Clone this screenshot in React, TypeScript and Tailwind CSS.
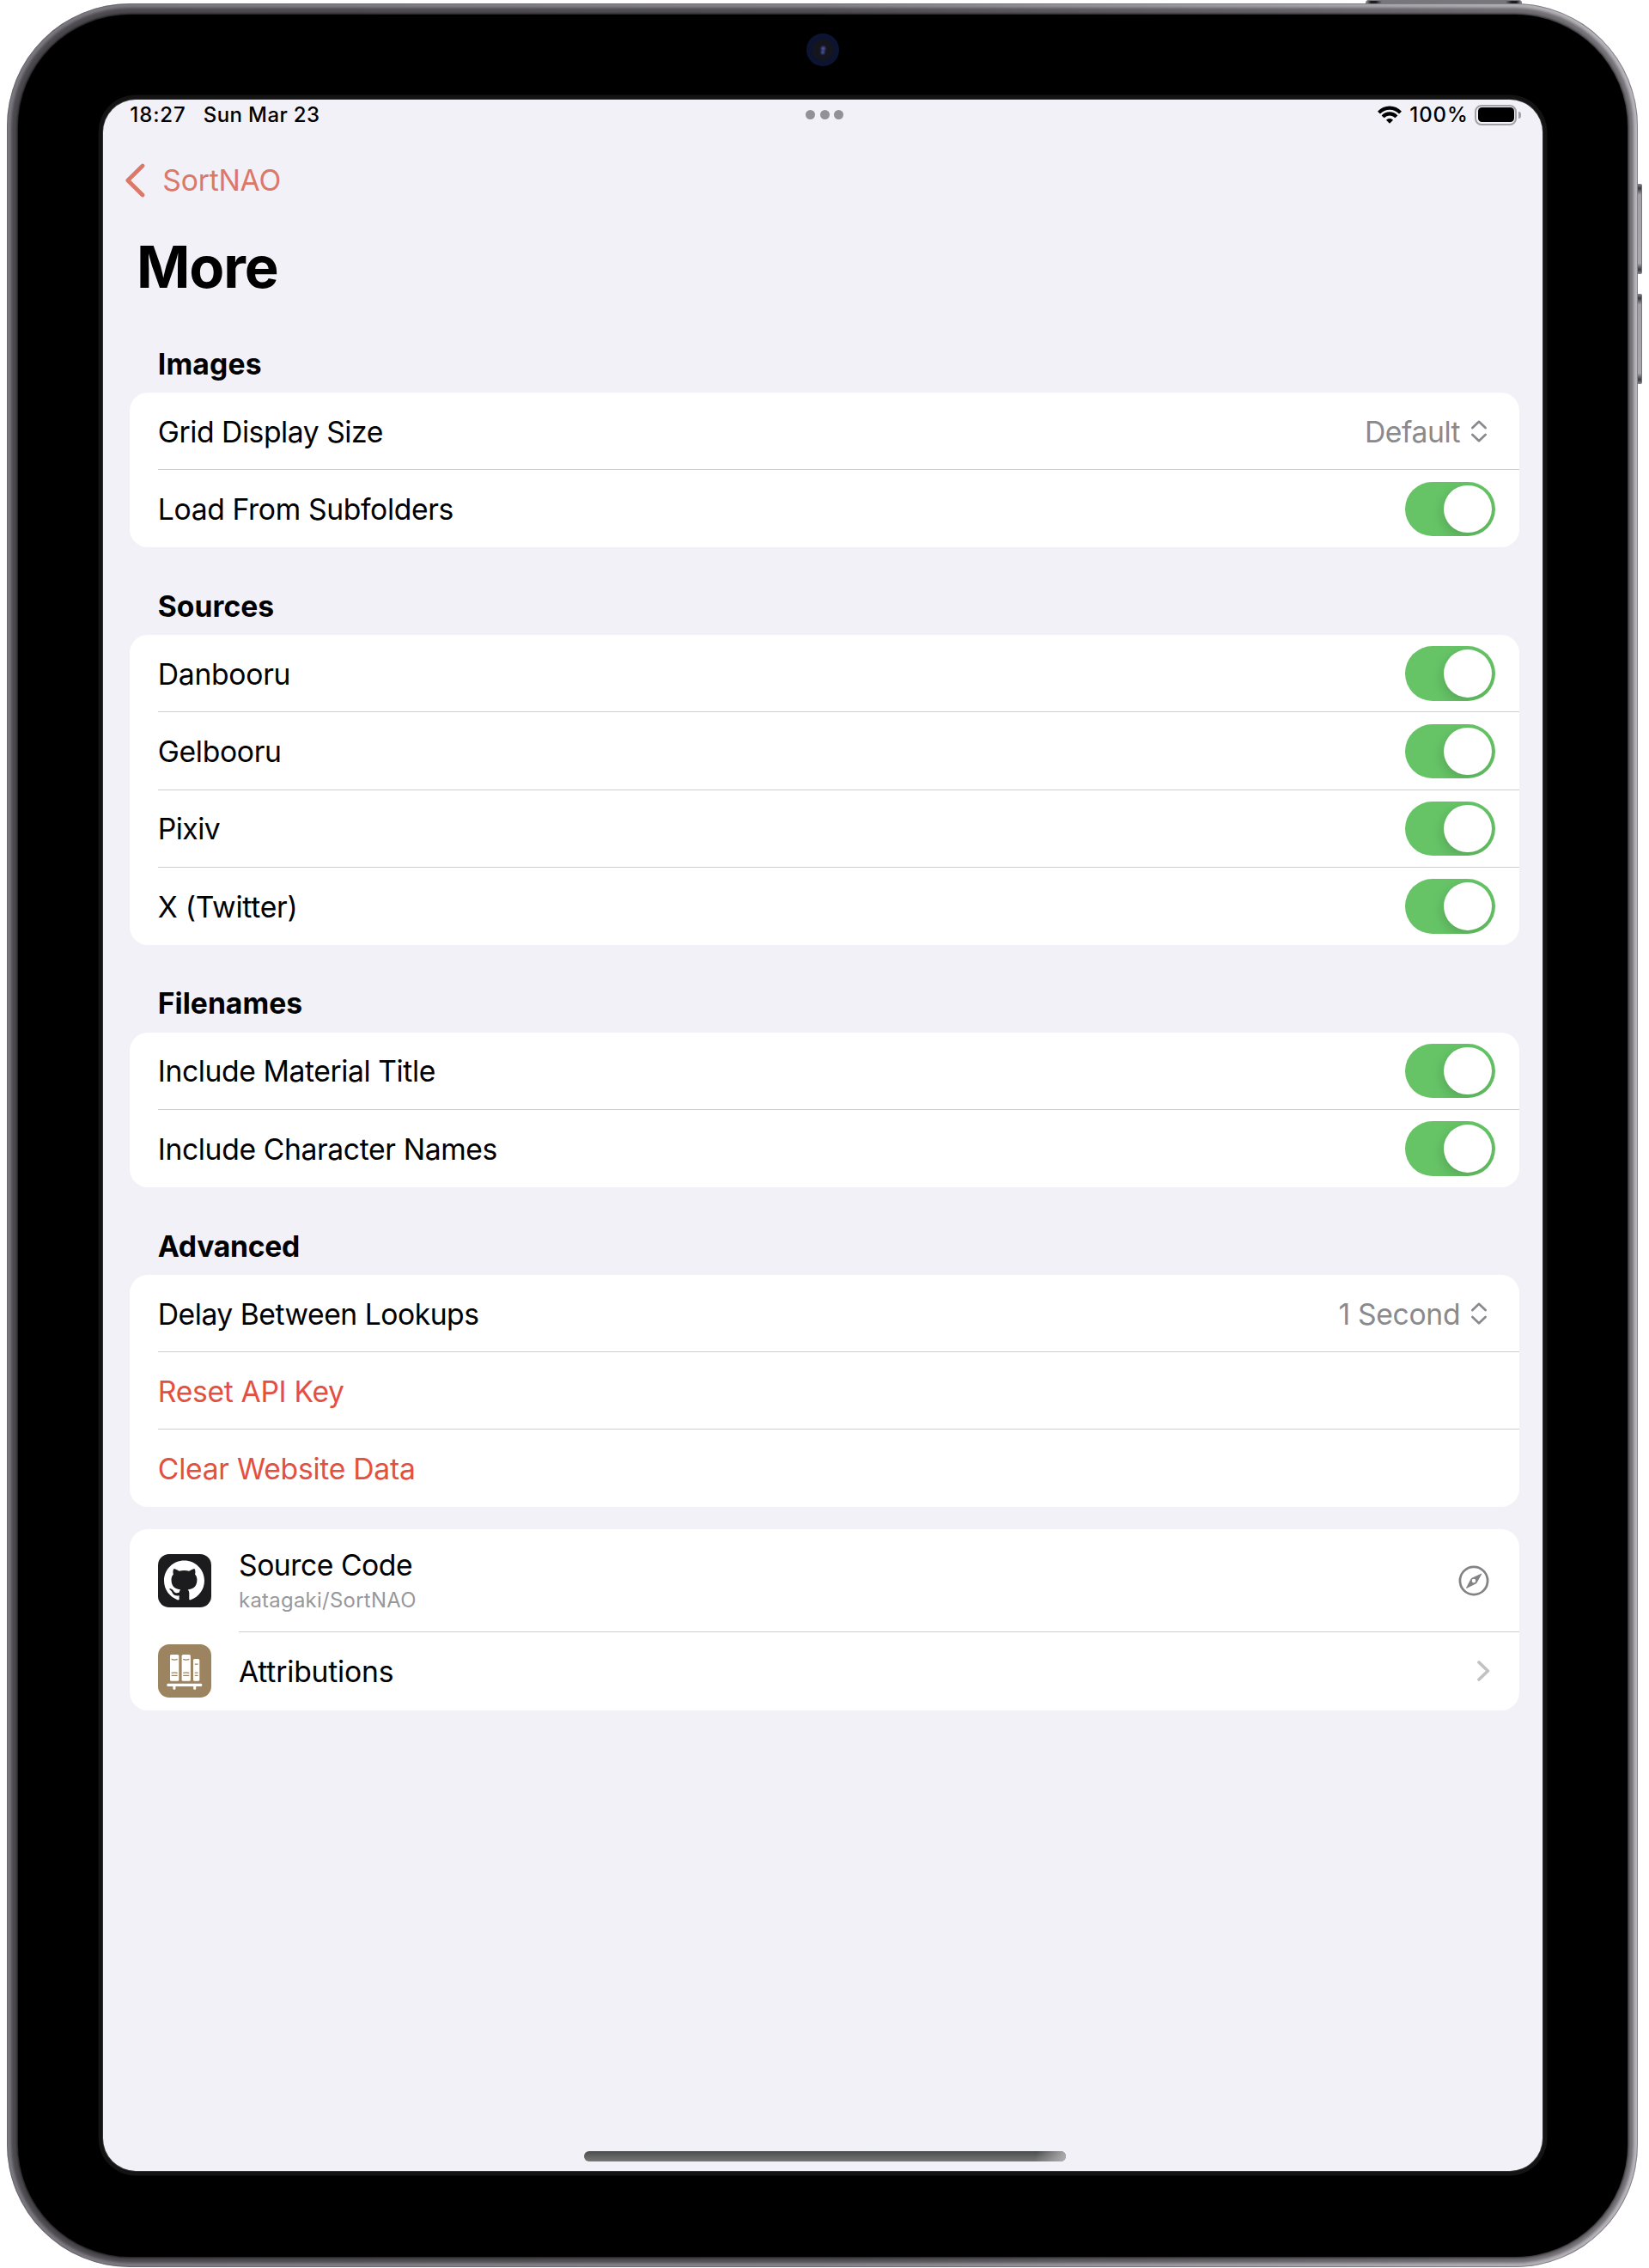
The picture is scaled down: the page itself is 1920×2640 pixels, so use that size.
import type { ReactNode } from "react";
import { SiGithub } from "react-icons/si";

function Toggle() {
  return (
    <div className="flex h-[63.5px] w-[105px] shrink-0 items-center justify-end overflow-hidden rounded-full bg-[#66c466] pr-1">
      <div className="size-[55.5px] rounded-full bg-white shadow-[-2px_5px_14px_rgba(0,0,0,0.14)]" />
    </div>
  );
}

function UpDown() {
  return (
    <svg viewBox="0 0 20 28" className="ml-[12px] mr-[8.5px] h-7 w-5" fill="none" stroke="#8a8a8e" strokeWidth="2.7" strokeLinecap="round" strokeLinejoin="round">
      <path d="M2.4 10 L10 2.8 L17.6 10" />
      <path d="M2.4 18 L10 25.2 L17.6 18" />
    </svg>
  );
}

function Row({ label, tracking, last, red, children }: { label: string; tracking: string; last?: boolean; red?: boolean; children?: ReactNode }) {
  return (
    <div className={`ml-[32.5px] flex h-[90.2px] items-center justify-between pr-[28.3px] ${last ? "" : "shadow-[inset_0_-1px_0_#cfcfd2]"}`}>
      <span className={`whitespace-nowrap pt-[2px] ${tracking} ${red ? "text-[#e4503f]" : "text-black"}`}>{label}</span>
      {children}
    </div>
  );
}

function Picker({ value, tracking }: { value: string; tracking: string }) {
  return (
    <div className="flex items-center text-[#8a8a8e]">
      <span className={`whitespace-nowrap pt-[2px] ${tracking}`}>{value}</span>
      <UpDown />
    </div>
  );
}

function Heading({ children, tracking }: { children: string; tracking: string }) {
  return (
    <h2 className={`h-[101.75px] pl-[32.5px] pt-[48.5px] font-bold leading-[40px] ${tracking}`}>{children}</h2>
  );
}

function Card({ children }: { children: ReactNode }) {
  return <div className="overflow-hidden rounded-[21px] bg-white">{children}</div>;
}

function StatusBar() {
  return (
    <div className="relative flex h-[35px] items-center pl-[31.3px] pr-[24.5px] text-[24px] font-medium leading-none">
      <span className="w-[85.5px] tracking-[0.9px]">18:27</span>
      <span className="tracking-[0.38px]">Sun Mar 23</span>
      <div className="absolute left-[818px] top-[12px] flex gap-[5.5px]">
        <i className="size-[11px] rounded-full bg-[#929197]" />
        <i className="size-[11px] rounded-full bg-[#929197]" />
        <i className="size-[11px] rounded-full bg-[#929197]" />
      </div>
      <svg viewBox="0 0 28 21" className="ml-auto mr-[9.3px] h-[21px] w-[28px]" fill="none" stroke="#000" strokeWidth="4.2">
        <path d="M1.5 8.1 C8.5 0.9 19.5 0.9 26.5 8.1" />
        <path d="M6.1 12.9 C10.6 8.3 17.4 8.3 21.9 12.9" />
        <path d="M14 20.8 L10 16.7 C12.2 14.5 15.8 14.5 18 16.7 Z" fill="#000" stroke="none" />
      </svg>
      <span className="w-[75.7px] tracking-[0.9px]">100%</span>
      <div className="flex h-[24px] w-[49px] items-center justify-center rounded-[8px] border-2 border-[#a2a1a6]">
        <div className="h-[17.5px] w-[42px] shrink-0 rounded-[4.5px] bg-black" />
      </div>
      <i className="ml-[2px] h-[8px] w-[3px] rounded-r-full bg-[#a2a1a6]" />
    </div>
  );
}

function BooksIcon() {
  return (
    <svg viewBox="0 0 62 62" className="size-[62px] shrink-0">
      <rect width="62" height="62" rx="13" fill="#9d8460" />
      <g fill="#fff">
        <rect x="14" y="12" width="10.3" height="30.8" rx="1.6" />
        <rect x="27.6" y="12" width="10.3" height="30.8" rx="1.6" />
        <rect x="41" y="17" width="7.3" height="25.8" rx="1.6" />
        <rect x="10.3" y="45.8" width="41" height="3.3" rx="1.4" />
        <rect x="17.4" y="48" width="3" height="4.8" rx="1" />
        <rect x="41.2" y="48" width="3" height="4.8" rx="1" />
      </g>
      <g fill="none" stroke="#9d8460" strokeWidth="1.2">
        <path d="M15.6 17.4 Q19.1 18.8 22.7 17.4 M15.6 33.4 Q19.1 32.4 22.7 33.4 M15.6 36.4 H22.7" />
        <path d="M29.2 17.4 Q32.7 18.8 36.3 17.4 M29.2 33.4 Q32.7 32.4 36.3 33.4 M29.2 36.4 H36.3" />
        <path d="M42.8 23.2 H46.6 M42.8 33.2 H46.6 M42.8 36.4 H46.6" />
      </g>
    </svg>
  );
}

function SideButton() {
  return (
    <div className="h-[105px] w-[6px] rounded-r-[2px] border-r border-[#77757a] bg-[linear-gradient(to_bottom,#8b898f_0%,#3c3b3f_5%,#a3a1a7_12%,#a9a7ad_88%,#3c3b3f_95%,#8b898f_100%)]" />
  );
}

export default function App() {
  return (
    <div className="relative h-[2640px] w-[1920px] overflow-hidden bg-white pl-2 pt-1 font-[Inter,sans-serif] text-[33.7px] text-black">
      <div className="absolute left-[1590px] top-0 h-[8px] w-[182px] rounded-t-[3px] border border-[#77767a] bg-[linear-gradient(to_right,#8a898c_0%,#1c1c1e_3%,#1c1c1e_6%,#77767a_10%,#77767a_90%,#1c1c1e_94%,#1c1c1e_97%,#8a898c_100%)]" />
      <div className="absolute left-[1906px] top-[214px] flex flex-col gap-[22.5px]">
        <SideButton />
        <SideButton />
      </div>

      <div className="relative h-[2635px] w-[1899px] overflow-hidden rounded-[143px] bg-[linear-gradient(to_right,#7b797f,#858288_50%,#b9b6bc)] p-px shadow-[inset_0_0_0_1px_rgba(90,88,94,0.55)]">
        <div className="absolute inset-[5px] rounded-[138px] bg-[linear-gradient(to_right,#4b494e,#504e53_50%,#747177)] blur-[1.5px]" />
        <div className="relative ml-[12px] mt-[11.5px] h-[2610.5px] w-[1874px] rounded-[131px] bg-black pl-[99px] pt-[99.5px] shadow-[0_0_3px_1px_rgba(0,0,0,0.75)]">
          {/* Front camera */}
          <div className="absolute left-[918px] top-[22.5px] flex size-[38px] items-center justify-center rounded-full bg-[radial-gradient(circle,#14151c_0%,#14151d_38%,#0b1330_56%,#0d1737_88%,#060a1a_100%)]">
            <div className="flex flex-col items-center">
              <i className="size-[5px] rounded-full bg-[#5552a8] blur-[1px]" />
              <i className="size-[4px] rounded-full bg-[#4d66b4] blur-[1px]" />
            </div>
          </div>

          <div className="relative h-[2411px] w-[1675.5px] rounded-[38px] bg-[#f2f1f7] shadow-[0_0_0_1px_#333,0_0_0_5.5px_#121312]">
            <StatusBar />

            <div className="flex h-[117px] items-center pl-[25px] text-[#db7868]">
              <svg viewBox="0 0 24 40" className="h-10 w-6" fill="none" stroke="#db7868" strokeWidth="4.7" strokeLinecap="round" strokeLinejoin="round">
                <path d="M21 3 L3.8 20 L21 37" />
              </svg>
              <span className="ml-[20.3px] pt-[2px] tracking-[-0.22px]">SortNAO</span>
            </div>

            <h1 className="flex h-[84px] items-center pl-[39px] text-[67px] font-bold leading-none tracking-[-1.1px]">More</h1>

            <div className="ml-[31.3px] mr-[26.5px] pt-[3.25px]">
              <Heading tracking="tracking-[0.15px]">Images</Heading>
              <Card>
                <Row label="Grid Display Size" tracking="tracking-[-0.47px]">
                  <Picker value="Default" tracking="tracking-[-0.45px]" />
                </Row>
                <Row label="Load From Subfolders" tracking="tracking-[-0.37px]" last><Toggle /></Row>
              </Card>

              <Heading tracking="tracking-[0px]">Sources</Heading>
              <Card>
                <Row label="Danbooru" tracking="tracking-[-0.3px]"><Toggle /></Row>
                <Row label="Gelbooru" tracking="tracking-[-0.35px]"><Toggle /></Row>
                <Row label="Pixiv" tracking="tracking-[-0.55px]"><Toggle /></Row>
                <Row label="X (Twitter)" tracking="tracking-[-0.27px]" last><Toggle /></Row>
              </Card>

              <Heading tracking="tracking-[0px]">Filenames</Heading>
              <Card>
                <Row label="Include Material Title" tracking="tracking-[-0.42px]"><Toggle /></Row>
                <Row label="Include Character Names" tracking="tracking-[-0.385px]" last><Toggle /></Row>
              </Card>

              <Heading tracking="tracking-[-0.3px]">Advanced</Heading>
              <Card>
                <Row label="Delay Between Lookups" tracking="tracking-[-0.49px]">
                  <Picker value="1 Second" tracking="tracking-[-0.35px]" />
                </Row>
                <Row label="Reset API Key" tracking="tracking-[-0.34px]" red />
                <Row label="Clear Website Data" tracking="tracking-[-0.27px]" red last />
              </Card>

              <div className="h-[25.5px]" />
              <Card>
                <div className="flex h-[120.3px] items-center pl-[32.5px]">
                  <div className="flex size-[62px] shrink-0 items-center justify-center rounded-[13px] bg-[#1c1b1d]">
                    <SiGithub className="size-[47px] text-white" />
                  </div>
                  <div className="ml-[32.2px] flex h-full flex-1 items-center justify-between pr-[35.5px] shadow-[inset_0_-1px_0_#cfcfd2]">
                    <div className="pt-[3px]">
                      <div className="leading-[40px] tracking-[-0.47px]">Source Code</div>
                      <div className="mt-[4px] text-[23.9px] leading-[34px] tracking-[0.28px] text-[#98989c]">katagaki/SortNAO</div>
                    </div>
                    <svg viewBox="0 0 36 36" className="size-9" fill="none">
                      <circle cx="18" cy="18" r="16.1" stroke="#838385" strokeWidth="2.8" />
                      <path fillRule="evenodd" fill="#838385" d="M26.6 9.8 C27.2 9.3 27.4 9.9 27.1 10.5 L21.6 20.3 C21.3 20.9 20.9 21.2 20.4 21.5 L10 26.7 C9.2 27.1 8.8 26.6 9.2 25.9 L14.5 16.1 C14.8 15.5 15.2 15.1 15.8 14.8 Z M18 15.8 A2.3 2.3 0 1 0 18 20.4 A2.3 2.3 0 1 0 18 15.8 Z" />
                    </svg>
                  </div>
                </div>
                <div className="flex h-[90.4px] items-center pl-[32.5px] pr-[33px]">
                  <BooksIcon />
                  <span className="ml-[32.2px] pt-[2px] tracking-[-0.2px]">Attributions</span>
                  <svg viewBox="0 0 18 26" className="ml-auto h-[26px] w-[18px]" fill="none" stroke="#c2c2c4" strokeWidth="3.8" strokeLinecap="round" strokeLinejoin="round">
                    <path d="M4 3 L14.4 13 L4 23" />
                  </svg>
                </div>
              </Card>
            </div>

            {/* Home indicator */}
            <div className="absolute bottom-[11px] left-[559.5px] h-[12px] w-[561px] overflow-hidden rounded-full bg-[linear-gradient(to_bottom,#4b4c4d,#777777)]">
              <div className="ml-auto h-full w-[40px] bg-[linear-gradient(105deg,rgba(170,170,173,0)_15%,#b0b0b3_100%)]" />
            </div>
          </div>
        </div>
      </div>
    </div>
  );
}
